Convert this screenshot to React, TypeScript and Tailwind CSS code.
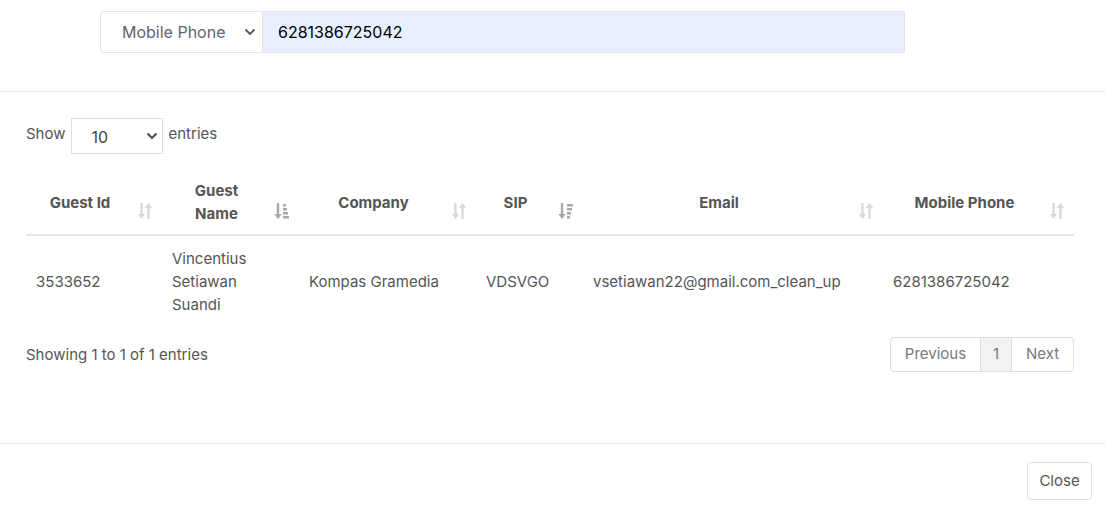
import React from "react";

const font = { fontFamily: "Inter, 'Noto Sans', sans-serif" };

function SortBoth() {
  return (
    <svg width="16" height="18" viewBox="0 0 16 18" className="text-[#d9d9d9]">
      <path d="M4.5 1v12.5" stroke="currentColor" strokeWidth="2.4" />
      <path d="M0.8 12l3.7 5 3.7-5z" fill="currentColor" />
      <path d="M11.5 17V4.5" stroke="currentColor" strokeWidth="2.4" />
      <path d="M7.8 6l3.7-5 3.7 5z" fill="currentColor" />
    </svg>
  );
}

function SortAsc() {
  return (
    <svg width="16" height="18" viewBox="0 0 16 18" className="text-[#a8a8a8]">
      <path d="M4 1v12.5" stroke="currentColor" strokeWidth="2.4" />
      <path d="M0.3 12l3.7 5 3.7-5z" fill="currentColor" />
      <rect x="9" y="2" width="3" height="2.5" fill="currentColor" />
      <rect x="9" y="6" width="4" height="2.5" fill="currentColor" />
      <rect x="9" y="10" width="5" height="2.5" fill="currentColor" />
      <rect x="9" y="14" width="6" height="2.5" fill="currentColor" />
    </svg>
  );
}

function SortDesc() {
  return (
    <svg width="16" height="18" viewBox="0 0 16 18" className="text-[#a8a8a8]">
      <path d="M4 1v12.5" stroke="currentColor" strokeWidth="2.4" />
      <path d="M0.3 12l3.7 5 3.7-5z" fill="currentColor" />
      <rect x="9" y="2" width="6" height="2.5" fill="currentColor" />
      <rect x="9" y="6" width="5" height="2.5" fill="currentColor" />
      <rect x="9" y="10" width="4" height="2.5" fill="currentColor" />
      <rect x="9" y="14" width="3" height="2.5" fill="currentColor" />
    </svg>
  );
}

function Chevron({ className = "" }: { className?: string }) {
  return (
    <svg width="12" height="8" viewBox="0 0 12 8" className={className}>
      <path d="M1.5 1.5l4.5 4.5 4.5-4.5" fill="none" stroke="currentColor" strokeWidth="1.8" />
    </svg>
  );
}

const cols = [
  { label: ["Guest Id"], w: "w-[136px]", icon: "both" },
  { label: ["Guest", "Name"], w: "w-[137px]", icon: "asc" },
  { label: ["Company"], w: "w-[177px]", icon: "both" },
  { label: ["SIP"], w: "w-[107px]", icon: "desc" },
  { label: ["Email"], w: "w-[300px]", icon: "both" },
  { label: ["Mobile Phone"], w: "flex-1", icon: "both" },
];

const row = [
  ["3533652"],
  ["Vincentius", "Setiawan", "Suandi"],
  ["Kompas Gramedia"],
  ["VDSVGO"],
  ["vsetiawan22@gmail.com_clean_up"],
  ["6281386725042"],
];

export default function App() {
  return (
    <div className="w-[1105px] h-[511px] bg-white text-[15px] text-[#555]" style={font}>
      {/* search bar */}
      <div className="h-[91px] flex items-start pt-[11px] pl-[100px]">
        <div className="flex h-[42px]">
          <div className="w-[163px] border border-[#e3e3e3] rounded-l-[4px] flex items-center justify-between pl-[21px] pr-[6px] text-[16px] text-[#5f6474]">
            <span>Mobile Phone</span>
            <Chevron className="text-[#555]" />
          </div>
          <div className="w-[642px] bg-[#e8f0fe] border border-[#e3e3e3] border-l-0 flex items-center pl-[15px] text-[16px] text-black">
            6281386725042
          </div>
        </div>
      </div>
      <div className="border-t border-[#e5e5e5]" />

      {/* body */}
      <div className="px-[26px] pt-[26px] h-[351px]">
        <div className="flex items-center h-[36px]">
          <span className="-mt-[4px]">Show</span>
          <div className="ml-[5px] w-[92px] h-[36px] border border-[#e0e0e0] flex items-center justify-between pl-[20px] pr-[4px] text-[16px] text-[#444]">
            <span className="mt-[2px]">10</span>
            <Chevron className="text-[#444]" />
          </div>
          <span className="ml-[6px] -mt-[4px]">entries</span>
        </div>

        <div className="mt-[16px] w-[1048px]">
          <div className="flex h-[66px] border-b-2 border-[#e4e4e4]">
            {cols.map((c, i) => (
              <div key={i} className={`${c.w} relative flex items-center justify-center pl-[10px] pr-[38px] font-bold leading-[23px] text-[#555] text-center`}>
                <div>
                  {c.label.map((l, j) => (
                    <div key={j}>{l}</div>
                  ))}
                </div>
                <div className="absolute right-[9px] bottom-[14px]">
                  {c.icon === "both" ? <SortBoth /> : c.icon === "asc" ? <SortAsc /> : <SortDesc />}
                </div>
              </div>
            ))}
          </div>
          <div className="flex py-[11px]">
            {row.map((cell, i) => (
              <div key={i} className={`${cols[i].w} flex flex-col justify-center px-[10px] leading-[23px] text-[#555]`}>
                {cell.map((l, j) => (
                  <div key={j}>{l}</div>
                ))}
              </div>
            ))}
          </div>
        </div>

        <div className="flex items-center justify-between w-[1048px] mt-[10px]">
          <span className="mt-[1px]">Showing 1 to 1 of 1 entries</span>
          <div className="flex h-[35px] border border-[#dedede] rounded-[4px] text-[#777] overflow-hidden">
            <div className="w-[89px] flex items-center justify-center">Previous</div>
            <div className="w-[32px] flex items-center justify-center bg-[#f2f2f2] border-x border-[#dedede]">1</div>
            <div className="w-[61px] flex items-center justify-center">Next</div>
          </div>
        </div>
      </div>

      <div className="border-t border-[#e5e5e5]" />
      <div className="flex justify-end pr-[13px] pt-[18px]">
        <div className="w-[65px] h-[38px] border border-[#e0e0e0] rounded-[4px] flex items-center justify-center text-[#555]">
          Close
        </div>
      </div>
    </div>
  );
}
